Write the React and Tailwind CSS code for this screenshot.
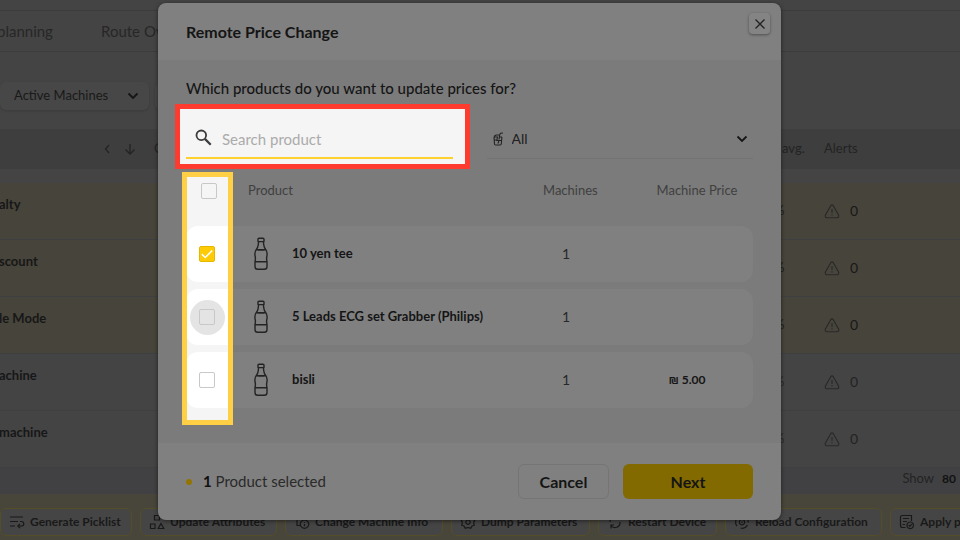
import React from "react";

const Bottle = () => (
  <svg width="16" height="34" viewBox="0 0 16 34" fill="none" stroke="#232323" strokeWidth="1.4" strokeLinejoin="round">
    <path d="M5 2.2Q5 1.2 6 1.2h4Q11 1.2 11 2.2V4.6H5ZM5.6 4.6 5.2 8Q5 10.500 3.200 12.600M10.400 4.600 10.800 8Q11 10.500 12.800 12.600M3.200 12.600Q1.200 15.500 2.200 19.500 2.700 22 2 24.600V29.500Q2 32.300 4.600 32.300H11.400Q14 32.300 14 29.500V24.600Q13.300 22 13.800 19.500 14.800 15.500 12.800 12.600ZM3.200 12.600Q8 13.700 12.800 12.600M2 24.700H14" />
  </svg>
);

const Chevron = ({ className }) => (
  <svg className={className} width="12" height="8" viewBox="0 0 12 8" fill="none" stroke="currentColor" strokeWidth="1.8">
    <path d="M1.500 1.500 6 6 10.500 1.500" />
  </svg>
);

const Alert = () => (
  <svg width="16" height="15" viewBox="0 0 16 15" fill="none" stroke="#282828" strokeWidth="1.100" strokeLinejoin="round">
    <path d="M6.700 1.700Q8 0 9.300 1.700L14.600 11Q15.400 13.600 13 13.800H3Q.6 13.600 1.400 11ZM8 5V9M8 10.300V11.400" />
  </svg>
);

const iconPaths = {
  picklist: "M1 3H14M1 7.500H9M1 12H6M11 7.500H12.500Q14.800 7.700 14.800 9.800 14.800 12 12.500 12H9M11 9.800 8.800 12 11 14.200",
  attributes: "M5.500 1.500H10.500V6H5.500ZM1.500 10H6V14.500H1.500ZM12 9.500 14.800 14.500H9.200Z",
  info: "M1.500 2H5M3 2V11.500H6M10.500 6A4.200 4.200 0 1 0 10.510 6M10.500 8.200V9M10.500 10V12.300",
  gear: "M8 1.500 9.500 3.200 12 2.800 12.600 5.200 14.700 6.500 13.700 8.800 14.300 11.200 12 12 10.800 14.200 8 13.500 5.200 14.200 4 12 1.700 11.200 2.300 8.800 1.300 6.500 3.400 5.200 4 2.800 6.500 3.200ZM8 6A2.200 2.200 0 1 0 8.010 6",
  restart: "M3 8A5 5 0 0 1 12 5M12 2V5.500H9M13 8A5 5 0 0 1 4 11.500M4 14.500V11H7",
  reload: "M5 2.500A6.200 6.200 0 0 0 3 12M6.500 14A6.200 6.200 0 0 0 13.500 11M14.200 8.500A6 6 0 0 0 11 2.800M8 5.500A2.700 2.700 0 1 0 8.010 5.500M8 7.500V9",
  apply: "M6.500 13.500H3.500Q1.500 13.500 1.500 11.500V3Q1.500 1.500 3.500 1.500H12.500V7M4 4.500H10M4 7.500H8M3.500 10.500H6M11.200 8A3.300 3.300 0 1 0 11.210 8M9.700 11.200 10.800 12.300 12.800 10.200",
};

const actions = [
  { label: "Generate Picklist", icon: "picklist", width: "w-[132px]" },
  { label: "Update Attributes", icon: "attributes", width: "w-[137px]" },
  { label: "Change Machine Info", icon: "info", width: "w-[158px]" },
  { label: "Dump Parameters", icon: "gear", width: "w-[139px]" },
  { label: "Restart Device", icon: "restart", width: "w-[119px]" },
  { label: "Reload Configuration", icon: "reload", width: "w-[157px]" },
  { label: "Apply planogram", icon: "apply", width: "w-[140px]" },
];

const machines = [
  { name: "alty", tone: "bg-[#47443b]", bold: true },
  { name: "scount", tone: "bg-[#47443b]", bold: true },
  { name: "le Mode", tone: "bg-[#47443b]", bold: true },
  { name: "achine", tone: "bg-[#444444]" },
  { name: "machine", tone: "bg-[#444444]" },
];

const products = [
  { name: "10 yen tee", machines: 1, price: "", checked: true },
  { name: "5 Leads ECG set Grabber (Philips)", machines: 1, price: "", hovered: true },
  { name: "bisli", machines: 1, price: "₪ 5.00" },
];

function Tick({ label, checked = false, hovered = false }) {
  return (
    <span className={`relative inline-flex size-[35px] items-center justify-center rounded-full ${hovered ? "bg-[#e4e4e4]" : ""}`}>
      <input
        type="checkbox"
        aria-label={label}
        defaultChecked={checked}
        className="peer size-4 appearance-none rounded-xs border border-[#c8c8c8] checked:border-[#e5b800] checked:bg-[#ffcb05]"
      />
      <svg className="pointer-events-none absolute hidden peer-checked:block" width="14" height="14" viewBox="0 0 14 14" fill="none" stroke="#fff" strokeWidth="1.600">
        <path d="M1.800 7.200 5.300 10.500 12.200 3.500" />
      </svg>
    </span>
  );
}

function MachinesPage() {
  return (
    <div className="bg-[#444444] text-[#1e1e1e]">
      <div className="h-2.5" />
      <nav className="flex h-[42px] items-center gap-[52px] border-y border-[#3c3c3c] text-[15px] text-[#272727]">
        <a href="#planning" className="-ml-[3px] w-[52px] whitespace-nowrap">planning</a>
        <a href="#route" className="whitespace-nowrap">Route Ov</a>
      </nav>
      <div className="flex h-[77px] items-center gap-1.5 pt-[10px]">
        <div className="relative flex h-7 w-[149px] items-center rounded-md bg-[#474747] shadow-sm">
          <select aria-label="Machine status" className="h-full w-full appearance-none bg-transparent pl-3.5 text-[13px] text-[#191919]">
            <option>Active Machines</option>
          </select>
          <Chevron className="pointer-events-none absolute right-2.5 text-[#151515]" />
        </div>
        <div className="h-7 w-[140px] rounded-md bg-[#474747] shadow-sm" />
      </div>
      <div className="grid h-10 grid-cols-[104px_50px_628px_42px_1fr] items-center bg-[#3e3e3e] text-[13px] text-[#232323]">
        <span />
        <span className="flex items-center gap-3.5">
          <svg width="6" height="10" viewBox="0 0 6 10" fill="none" stroke="currentColor" strokeWidth="1.200"><path d="M5 1 1.500 5 5 9" /></svg>
          <svg width="12" height="12" viewBox="0 0 12 12" fill="none" stroke="currentColor" strokeWidth="1.300"><path d="M6 1V11M1.500 6.500 6 11 10.500 6.500" /></svg>
        </span>
        <span>C</span>
        <span>avg.</span>
        <span>Alerts</span>
      </div>
      <div className="h-3.5" />
      {machines.map((m) => (
        <div key={m.name} className={`grid h-[57px] grid-cols-[774px_50px_26px_1fr] items-center border-b border-[#3e3f40] text-[13px] ${m.tone}`}>
          <span className="-ml-px pb-3 font-bold text-[#171717]">{m.name}</span>
          <span className={m.bold ? "text-[#1c1c1c]" : "text-[#272727]"}>%</span>
          <Alert />
          <span className={m.bold ? "text-sm text-[#181818]" : "text-sm text-[#232323]"}>0</span>
        </div>
      ))}
      <div className="flex h-[26px] items-center justify-end gap-2 bg-[#414143] pr-1 pb-1 text-[13px] text-[#232323]">
        <span>Show</span>
        <b className="text-xs text-[#121212]">80</b>
      </div>
      <div className="flex h-[50px] items-start gap-2 overflow-hidden bg-[#48453b] pt-[14px]">
        {actions.map((a) => (
          <button key={a.label} type="button" className={`flex h-7 shrink-0 items-center gap-[5px] whitespace-nowrap rounded-md border border-[#554d27] bg-[#454545] pl-2 text-xs font-bold text-[#191919] ${a.width}`}>
            <svg width="16" height="16" viewBox="0 0 16 16" fill="none" stroke="currentColor" strokeWidth="1.200" className="shrink-0"><path d={iconPaths[a.icon]} /></svg>
            {a.label}
          </button>
        ))}
      </div>
    </div>
  );
}

function PriceDialog() {
  return (
    <section role="dialog" aria-labelledby="dialog-title" className="absolute top-[3px] left-[158px] w-[623px] overflow-hidden rounded-lg bg-[#808080] text-[#151515] shadow-[0_1px_4px_rgba(0,0,0,0.5)]">
      <header className="flex h-[57px] items-center justify-between pr-[11px] pl-7">
        <h1 id="dialog-title" className="text-base font-bold">Remote Price Change</h1>
        <button type="button" aria-label="Close" className="mb-4 flex size-[21px] items-center justify-center rounded-sm bg-[#848484] shadow-[0_1px_3px_rgba(0,0,0,0.4)]">
          <svg width="10" height="10" viewBox="0 0 10 10" stroke="#222" strokeWidth="1.300"><path d="M.5.5 9.500 9.500M9.500.5.5 9.500" /></svg>
        </button>
      </header>

      <div className="bg-[#7b7b7b] px-7 pt-[18px] pb-7">
        <h2 className="text-[15px] leading-5 font-medium">Which products do you want to update prices for?</h2>
        <div className="mt-5 grid grid-cols-2 gap-[34px]">
          <div className="relative">
            <div className="absolute -top-3.5 -right-[17px] -bottom-2.5 -left-[11px] border-[5px] border-[#ff3b2f] bg-[#f5f5f5]" />
            <label className="relative flex h-[41px] items-center gap-2.5 border-b-2 border-[#ffd12e] pt-1 pl-[9px]">
              <svg width="17" height="17" viewBox="0 0 17 17" fill="none" stroke="#3c3c3c" strokeWidth="1.800" className="mb-1 shrink-0"><circle cx="6.300" cy="6.300" r="4.800" /><path d="M9.900 9.900 15.700 15.700" strokeWidth="2.300" /></svg>
              <input type="text" aria-label="Search product" placeholder="Search product" className="w-full bg-transparent text-[15px] outline-none placeholder:text-[#ababab]" />
            </label>
          </div>
          <label className="relative flex h-[41px] items-center border-b border-[#727272] pt-0.5">
            <svg width="11" height="14" viewBox="0 0 11 14" fill="none" stroke="#232323" strokeWidth="1.100" className="absolute left-[6px]"><path d="M1 5 1.500 12Q1.600 13 2.500 13H7.300Q8.200 13 8.300 12L8.900 5M1 5H4.500L3.800 8.500H6L5 11.500M1.500 8H3.800M6 8.500H8.500M6 7.500 6.800 2.500 7.500 1.200 10 1M8.900 5H6.500M1.200 5Q1.500 3 3.500 3H6" /></svg>
            <select aria-label="Product category" className="h-full w-full appearance-none bg-transparent pl-[25px] text-sm text-[#202020]">
              <option>All</option>
            </select>
            <Chevron className="pointer-events-none absolute right-[5px] text-[#151515]" />
          </label>
        </div>

        <div className="relative mt-1">
          <div className="absolute top-[9px] bottom-[-10px] -left-1 w-[51px] bg-[#f5f5f5]" />
          <table className="relative w-full table-fixed border-separate border-spacing-x-0 border-spacing-y-[7px]">
            <colgroup>
              <col className="w-[42px]" />
              <col className="w-[64px]" />
              <col />
              <col className="w-[136px]" />
              <col className="w-[112px]" />
            </colgroup>
            <thead>
              <tr className="h-[49px] align-top text-[13px] text-[#404040]">
                <th className="pt-[3px] pl-1 font-normal"><Tick label="Select all products" /></th>
                <th colSpan="2" className="pt-[11px] pl-5 text-left font-normal">Product</th>
                <th className="pt-[11px] pl-[38px] text-left font-normal">Machines</th>
                <th className="pt-[11px] text-center font-normal">Machine Price</th>
              </tr>
            </thead>
            <tbody>
              {products.map((p) => (
                <tr key={p.name} className="h-14 text-[13px]">
                  <td className="rounded-l-xl bg-white text-center leading-none"><Tick label={p.name} checked={p.checked} hovered={p.hovered} /></td>
                  <td className="bg-[#808080] pl-[25px]"><Bottle /></td>
                  <td className="bg-[#808080] font-bold">{p.name}</td>
                  <td className="bg-[#808080] pl-[57px] text-sm text-[#282828]">{p.machines}</td>
                  <td className="rounded-r-xl bg-[#808080] pr-5 text-center text-xs font-bold">{p.price}</td>
                </tr>
              ))}
            </tbody>
          </table>
          <div className="pointer-events-none absolute top-[9px] bottom-[-10px] -left-1 w-[51px] border-[5px] border-[#ffd046]" />
        </div>
      </div>

      <footer className="flex h-[77px] items-center px-7">
        <span className="size-1.5 rounded-full bg-[#927400]" />
        <p className="ml-[11px] flex-1 text-[15px] text-[#2a2a2a]"><b className="text-[#111111]">1</b> Product selected</p>
        <button type="button" className="h-[35px] w-[91px] rounded-md border border-[#757575] text-base font-bold">Cancel</button>
        <button type="button" className="ml-3.5 h-[35px] w-[130px] rounded-md bg-[#826900] text-base font-bold">Next</button>
      </footer>
    </section>
  );
}

export default function App() {
  return (
    <main className="relative h-screen overflow-hidden bg-[#444444] font-['Lato','Open_Sans',sans-serif]">
      <MachinesPage />
      <PriceDialog />
    </main>
  );
}
